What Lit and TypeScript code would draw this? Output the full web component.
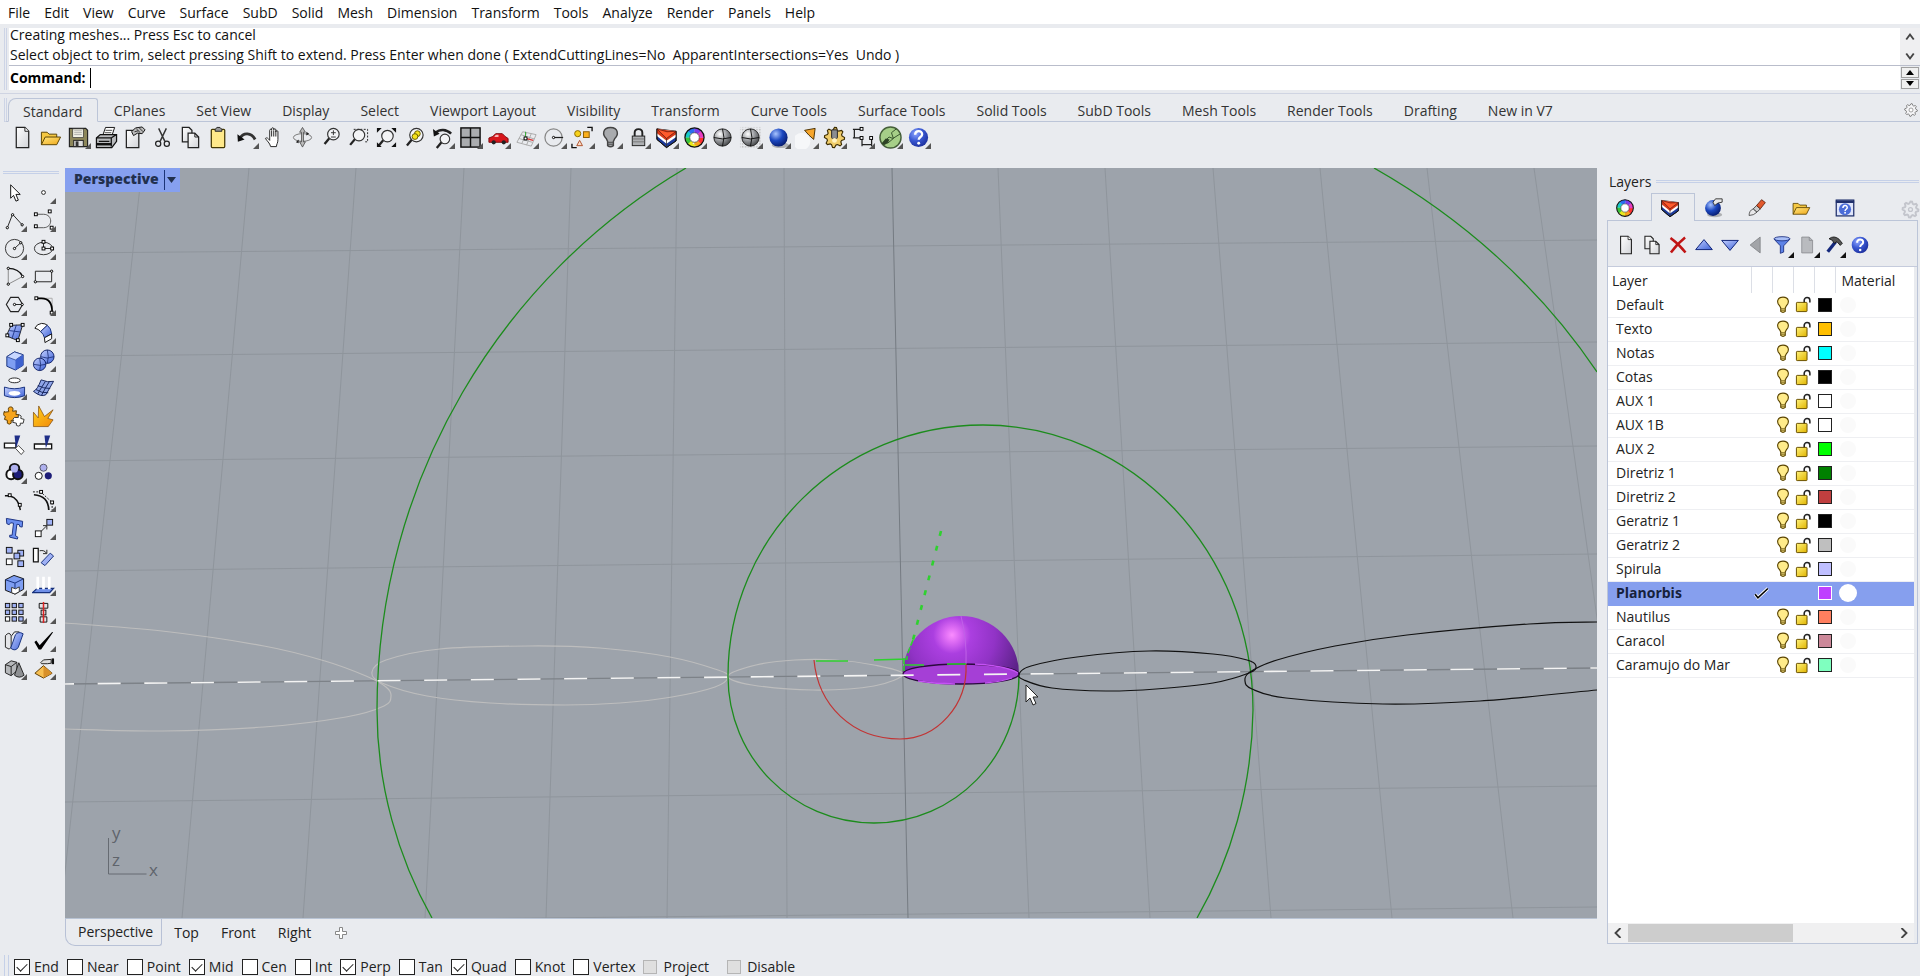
import { LitElement, html, svg, css, nothing } from "lit";
import type { SVGTemplateResult } from "lit";
import { customElement, state } from "lit/decorators.js";
import { classMap } from "lit/directives/class-map.js";

type Point = [number, number];

/** Smooth curve through a list of points (Catmull-Rom converted to Bezier). */
function smooth(points: Point[], closed = false): string {
  const n = points.length;
  const at = (i: number): Point =>
    closed ? points[(i + n) % n] : points[Math.max(0, Math.min(n - 1, i))];
  let d = `M${points[0][0]} ${points[0][1]}`;
  const last = closed ? n : n - 1;
  for (let i = 0; i < last; i++) {
    const [a, b, c, e] = [at(i - 1), at(i), at(i + 1), at(i + 2)];
    const c1 = [b[0] + (c[0] - a[0]) / 6, b[1] + (c[1] - a[1]) / 6];
    const c2 = [c[0] - (e[0] - b[0]) / 6, c[1] - (e[1] - b[1]) / 6];
    d += `C${c1[0].toFixed(1)} ${c1[1].toFixed(1)} ${c2[0].toFixed(1)} ${c2[1].toFixed(1)} ${c[0]} ${c[1]}`;
  }
  return d + (closed ? "Z" : "");
}

const node = (x: number, y: number) =>
  svg`<rect x=${x - 1.5} y=${y - 1.5} width="3" height="3" fill="#fff" stroke="#000"/>`;
const dot = (x: number, y: number) =>
  svg`<circle cx=${x} cy=${y} r="1.2" fill="#fff" stroke="#000"/>`;
const box = (x: number, y: number, s: number, fill: string) =>
  svg`<rect x=${x} y=${y} width=${s} height=${s} fill=${fill} stroke="#111"/>`;
const lens = (x: number, y: number, r: number) =>
  svg`<path d="M${x - r * 0.7} ${y + r * 0.7}L${x - r * 0.7 - 5} ${y + r * 0.7 + 6}" stroke="#222" stroke-width="2.4"/><circle cx=${x} cy=${y} r=${r} fill="#f3f4f6" stroke="#333" stroke-width="1.2"/>`;
const gearPath = (r: number, c = 12) => {
  let d = "";
  for (let i = 0; i < 32; i++) {
    const a = (i / 32) * Math.PI * 2;
    const k = i % 4 < 2 ? r : r * 0.76;
    d += `${i ? "L" : "M"}${(c + Math.cos(a) * k).toFixed(1)} ${(c + Math.sin(a) * k).toFixed(1)}`;
  }
  return d + "Z";
};

const sheet = svg`<path d="M5.500 1.500h9l4 4v17h-13z" fill="url(#paper)" stroke="#222" stroke-width="1.300"/><path d="M14.500 1.500v4h4" fill="#fff" stroke="#222"/>`;
const folder = svg`<path d="M2.500 19.500v-13h6l2 2h8v3" fill="#f5c842" stroke="#5a4200"/><path d="M2.500 19.500l4-8h16l-4 8z" fill="url(#gold)" stroke="#5a4200"/>`;
const help = svg`<circle cx="12" cy="12" r="10" fill="url(#ball)"/><path d="M8.500 9.200c0-5 7.300-5 7.300-.6 0 3-3.600 2.800-3.600 5.800" fill="none" stroke="#fff" stroke-width="2.400"/><circle cx="12.200" cy="18" r="1.500" fill="#fff"/>`;
const wheel = svg`${["#f33", "#f7a21b", "#e8e81c", "#3ac43a", "#17c9c9", "#2a6df0", "#7a3ce8", "#e83cc0"].map(
  (c, i) => svg`<circle cx="12" cy="12" r="7.500" fill="none" stroke=${c} stroke-width="5" pathLength="80" stroke-dasharray="10.500 69.500" stroke-dashoffset=${-i * 10}/>`,
)}<circle cx="12" cy="12" r="10" fill="none" stroke="#111" stroke-width="1.300"/><circle cx="12" cy="12" r="5" fill="#fff" stroke="#333" stroke-width=".7"/>`;
const layers = svg`<path d="M2 3v11l10 8.500 10-7v-10z" fill="#1c3a9a" stroke="#111"/><path d="M2 3v7.500l10 8 10-7v-6z" fill="#fff"/><path d="M2 3v4.500l10 8 10-7v-3z" fill="#d83a18"/><path d="M2 3l10.500 3 9.500-.5-10 7.500z" fill="#ff5a2c" stroke="#5a1408" stroke-width=".7"/><path d="M12 13v9" stroke="#333" stroke-width=".8"/><path d="M2 3v11l10 8.500 10-7v-10" fill="none" stroke="#111"/>`;
const greySphere = svg`<circle cx="12" cy="12" r="9" fill="url(#steel)" stroke="#222"/><path d="M3 12q9 3 18 0M12 3q3 9 0 18" fill="none" stroke="#111"/>`;
const blueSphere = svg`<ellipse cx="14" cy="20" rx="9" ry="3" fill="#000" opacity=".25"/><circle cx="12" cy="12" r="9.500" fill="url(#gloss)"/>`;
const bulbShape = (fill: string, line: string) =>
  svg`<path d="M12 1.500c-8.500 0-8.500 8-4.500 11.500l1.500 3v4.500q3 2.500 6 0v-4.500l1.500-3c4-3.500 4-11.500-4.500-11.500z" fill=${fill} stroke=${line} stroke-width="1.500"/><path d="M9.500 17h5M9.500 19h5" stroke=${line}/>`;
const hand = svg`<path d="M8 21.500c-1-4-4-6-5.500-8.500 1.500-1.500 3 0 4.500 2v-10.500c0-1.500 2-1.500 2 0v-1.500c0-1.600 2.200-1.600 2.200 0v1c0-1.500 2.200-1.500 2.200 0v2c0-1.500 2.200-1.500 2.200 0v8c0 4-1.600 5-1.600 7.500z" fill="#fff" stroke="#222"/><path d="M9 5v6M11.200 4.500v6.500M13.400 5v6" stroke="#222"/>`;
const knife = (x: number) => svg`<path d="M${x} 2.500h6l-4.500 13.500z" fill="#1f2f88"/>`;

const icons: Record<string, SVGTemplateResult> = {
  sheet,
  folder,
  help,
  wheel,
  layers,
  greySphere,
  blueSphere,
  hand,
  save: svg`<path d="M2.500 2.500h17l2 2v17h-19z" fill="#8d875a" stroke="#222" stroke-width="1.200"/><rect x="6" y="3" width="11" height="9" fill="#f4f4e8" stroke="#333" stroke-width=".7"/><path d="M7.500 5h8M7.500 7h8M7.500 9h8" stroke="#999" stroke-width=".8"/><rect x="7" y="15" width="10" height="6.500" fill="#ddd" stroke="#222"/><rect x="9" y="16" width="3" height="5" fill="#333"/>`,
  print: svg`<path d="M8 10l3-8.500h9.500l-3 9z" fill="#fff" stroke="#111"/><path d="M11 4.500h7M10 7h7" stroke="#444"/><path d="M1.500 12.500l4-3.500h17v7l-5 6.500h-16z" fill="#b8babd" stroke="#111" stroke-width="1.300"/><path d="M1.500 12.500h15.500l5-3.500M17 12.500v9M4 16h11" fill="none" stroke="#111" stroke-width="1.300"/><path d="M2 19h15" stroke="#111" stroke-width="2.500"/>`,
  props: svg`<path d="M3.500 4.500h13v18h-13z" fill="url(#paper)" stroke="#222" stroke-width="1.300"/><path d="M9 6l4-4 7-1 3 3-3 4-5-.5-4 2.500z" fill="#bbb" stroke="#111"/><path d="M14 3l4 4M17 2l4 4M12 6l4-1" stroke="#333"/>`,
  cut: svg`<path d="M8 2.500l6.500 13.500M16 2.500l-6.500 13.500" stroke="#333" stroke-width="1.500"/><circle cx="7.500" cy="18.500" r="2.700" fill="none" stroke="#222" stroke-width="1.300"/><circle cx="16.500" cy="18.500" r="2.700" fill="none" stroke="#222" stroke-width="1.300"/>`,
  copy: svg`<path d="M3.500 1.500h7l3 3v12h-10z" fill="url(#paper)" stroke="#222" stroke-width="1.300"/><path d="M9.500 7.500h7l4 4v11h-11z" fill="url(#paper)" stroke="#222" stroke-width="1.300"/><path d="M16.500 7.500v4h4" fill="none" stroke="#222"/>`,
  paste: svg`<rect x="4.500" y="3.500" width="14" height="19" rx="1" fill="#ffe98a" stroke="#443800" stroke-width="1.300"/><path d="M8.500 5.500v-2l2-2h3l2 2v2z" fill="#999" stroke="#222"/>`,
  undo: svg`<path d="M5 13c4-7 12-6 16 1" fill="none" stroke="#333" stroke-width="3"/><path d="M2.500 8.500l.5 8 7-2.500z" fill="#111"/>`,
  rotate: svg`<ellipse cx="12" cy="12" rx="9.500" ry="4" fill="none" stroke="#777"/><path d="M12 1.500l3 5h-2v10h2l-3 5.500-3-5.500h2v-10h-2z" fill="#bbb" stroke="#444" stroke-width=".8"/><path d="M5 17l3-3v4zM19 8l-3 2v-4z" fill="#222"/>`,
  zoom: svg`${lens(15, 8.5, 6)}<path d="M12.500 7h5M15 4.500v5M12.500 11.500h5" stroke="#333"/>`,
  zoomWindow: svg`<path d="M7 3.500h14.500v13h-4" fill="none" stroke="#222" stroke-dasharray="2 1.500"/>${lens(12.5, 9.5, 6)}`,
  zoomExtents: svg`${lens(13, 10.5, 6)}<path d="M2 2h5l-5 5zM22 2v5l-5-5zM22 22h-5l5-5zM2 22v-5l5 5z" fill="#111"/>`,
  zoomSelected: svg`${lens(14, 9.5, 7)}<circle cx="15" cy="8" r="3" fill="#f5e21c" stroke="#665c00"/><circle cx="12.500" cy="11" r="3" fill="#f5e21c" stroke="#665c00"/>`,
  undoView: svg`${lens(14.5, 13.5, 5)}<path d="M5 7c4-4 11-4 16 1" fill="none" stroke="#222" stroke-width="2.600"/><path d="M2 3l1 8 6-3z" fill="#111"/>`,
  fourView: svg`<rect x="2" y="2" width="20" height="20" fill="#aaacaf" stroke="#111" stroke-width="1.500"/><path d="M12 2v20M2 12h20" stroke="#111" stroke-width="1.500"/>`,
  car: svg`<path d="M2 12.500l4-1.500 3-3h7l3 3 3 2v4h-20z" fill="#d8161c" stroke="#7c0b0e"/><path d="M9 9.500l-1.500 2h4.500v-2.500h-2z" fill="#f7b4b4"/><circle cx="7" cy="17" r="2.200" fill="#222"/><circle cx="17.500" cy="17" r="2.200" fill="#222"/>`,
  cplane: svg`<path d="M2 17l6-11 14 3-5 12zM4 13l14 4M6 9l14 4.500M7 18.500l5-11.500M12 20l5-12" fill="none" stroke="#aaa"/><path d="M11 13v-7" stroke="#3a3"/><path d="M11 13l8 2" stroke="#d33" stroke-width="1.400"/>${node(11, 13)}`,
  circleRadius: svg`<circle cx="11" cy="12" r="9" fill="none" stroke="#888" stroke-width="1.300"/><path d="M11 12h10" stroke="#222" stroke-width="1.300"/>${dot(11, 12)}`,
  selectShapes: svg`<circle cx="7" cy="8" r="3.200" fill="#f7d21c" stroke="#8a6a00"/><rect x="13" y="6" width="6" height="6" fill="#fbb01c" stroke="#8a5a00"/><path d="M9 15l3 5.500h-6z" fill="#f8dccb" stroke="#b0522a"/><path d="M17 1.500h5v4M6 22.500h-5v-4" fill="none" stroke="#111" stroke-width="1.400"/>`,
  bulbGrey: bulbShape("#a9abae", "#444"),
  bulbOn: bulbShape("#ffeb8a", "#5a4400"),
  lock: svg`<path d="M8 11v-4c0-5 8-5 8 0v4" fill="none" stroke="#222" stroke-width="2"/><rect x="5.500" y="10.500" width="13" height="10" fill="#aeb0b3" stroke="#222"/><path d="M6 13.500h12M6 16.500h12" stroke="#777"/>`,
  unlock: svg`<path d="M13 10v-4c0-5 8-5 8 0v3" fill="none" stroke="#222" stroke-width="2.200"/><rect x="2" y="9" width="15" height="13" rx="1" fill="url(#brass)" stroke="#6b5200" stroke-width="1.400"/>`,
  gridSphere: svg`<path d="M1 1h22v22h-22z" fill="url(#checker)"/>${greySphere}`,
  spot: svg`<circle cx="7" cy="16" r="9" fill="#fff" opacity=".6"/><path d="M10 4.500l11-2-1.500 11.500q-5-4-9.500-9.500z" fill="#f6a52c" stroke="#4a3000"/>`,
  gearTool: svg`<path d=${gearPath(10.5)} fill="#f0cd6a" stroke="#3c2c00" stroke-width="1.200"/><rect x="9" y="4" width="6" height="9" rx="1" fill="#8a8d91" stroke="#222"/><circle cx="12" cy="15" r="2.500" fill="#fff2c0"/>`,
  dimension: svg`<path d="M3.500 3v10M2 3.500h9M2 12.500h9M11.500 12v9M21.500 12v9M12 19.500h9" fill="none" stroke="#222" stroke-width="1.300"/>${node(11, 3)}${node(11, 12.5)}${node(21, 12.5)}`,
  hopper: svg`<circle cx="12" cy="12" r="11" fill="#a6cf88" stroke="#46603a" stroke-width="1.500"/><path d="M3.500 18l7-6.500 4 1.500 8-5M9 18l6-5-2-6 5-4" fill="none" stroke="#33502a"/><path d="M3 18l4-5 4 1-2 4-4 2z" fill="#2e4426"/>`,
  gear: svg`<path d=${gearPath(9.5)} fill="#f4f4f6" stroke="#777" stroke-width="1.300"/><circle cx="12" cy="12" r="3" fill="#fff" stroke="#777"/>`,
  gearPale: svg`<path d=${gearPath(10)} fill="none" stroke="#c3c5cc" stroke-width="2.400"/><circle cx="12" cy="12" r="2.500" fill="none" stroke="#c3c5cc" stroke-width="1.600"/>`,
  pointer: svg`<path d="M8 4v14l3-3 2.500 6 2.500-1-2.500-6h4.500z" fill="#fff" stroke="#111"/>`,
  point: svg`<circle cx="12" cy="12" r="2" fill="#fff" stroke="#222"/>`,
  polyline: svg`<path d="M4.500 19.500l5.500-14 10 11" fill="none" stroke="#222"/>${dot(4.500, 19.500)}${dot(10, 6)}${dot(20, 16.5)}`,
  curve: svg`<path d="M4 5.500h8c10 0 10 14 0 14h-8" fill="none" stroke="#555"/>${node(4, 5.5)}${node(18.500, 2.500)}${node(4, 18)}${node(20.500, 19.5)}`,
  circle: svg`<circle cx="12" cy="12" r="9.500" fill="none" stroke="#333"/><path d="M12 12l7-6.500" stroke="#222"/>${dot(12, 12)}${dot(18.5, 6)}`,
  ellipse: svg`<ellipse cx="12" cy="12" rx="9.500" ry="6.500" fill="none" stroke="#333"/><path d="M12 5v7h9" fill="none" stroke="#222"/>${node(12, 5)}${node(12, 12)}${node(21, 12)}`,
  arc: svg`<path d="M5.500 20v-16.500M5.500 20l15-8" fill="none" stroke="#888"/><path d="M5.500 3.500q11 0 15 8.500" fill="none" stroke="#111" stroke-width="1.300"/>${dot(5.500, 3.500)}${dot(5.5, 20)}${dot(20.5, 12)}`,
  rect: svg`<path d="M3.500 6.500h17v11h-17z" fill="none" stroke="#222"/>${dot(20.5, 6.500)}${dot(3.500, 17.5)}`,
  polygon: svg`<path d="M8 4.500h8l4.500 7.500-4.500 7.500h-8l-4.500-7.500z" fill="none" stroke="#222" stroke-width="1.200"/><path d="M12 12h8" stroke="#222"/>${dot(12, 12)}${dot(20, 12)}`,
  fillet: svg`<path d="M5 5.500h16v16" fill="none" stroke="#aaa"/><path d="M5 5.500h5q11 0 11 14" fill="none" stroke="#000" stroke-width="1.800"/>${node(4.500, 5.500)}${node(20.5, 20.5)}`,
  surface: svg`<path d="M8.500 4.500l12-.5-5 16.500-12-5z" fill="url(#sky)" stroke="#222"/><path d="M14 4l-4.500 14M6.500 10l12 1.500" stroke="#223a8c"/>${node(8.500, 4)}${node(20.500, 4)}${node(4.500, 15)}${node(15.500, 20)}`,
  extrude: svg`<path d="M3 7.500q2-4.500 7-5 4 0 6 2l-7 6.500q-2-2.500-6-3.500z" fill="#fff" stroke="#111"/><path d="M9 11l7-6.500q4 3 4.500 9l-7.500 4q-1-4-4-6.500z" fill="url(#sky)" stroke="#16307c"/><path d="M13 17.500l7.500-4v5l-7 4z" fill="#fff" stroke="#111"/>`,
  cube: svg`<path d="M4 8l8-5 9 3v11l-8 5-9-4z" fill="#7e9ef2" stroke="#16307c"/><path d="M4 8l9 3.500 8-5.500-9-3z" fill="#c9d7ff" stroke="#16307c" stroke-width=".7"/><path d="M13 11.500l8-5.500v11l-8 5z" fill="#3e62cf"/>`,
  spheres: svg`<circle cx="16" cy="8" r="7" fill="url(#sky)" stroke="#12246a"/><circle cx="8" cy="16" r="6.500" fill="url(#sky)" stroke="#12246a"/><path d="M9 8q7 3 14 0M16 1q2 7 0 14M1.500 16q7 2 13 0M8 9.500q2 7 0 13" stroke="#12246a" stroke-width=".8"/>`,
  booleanHole: svg`<ellipse cx="12" cy="3.500" rx="6" ry="2.500" fill="#fff" stroke="#222"/><path d="M1.500 10.500q10 3.500 21 0v9q-10 4-21 0z" fill="url(#sky)" stroke="#16307c"/><ellipse cx="12" cy="17" rx="6" ry="2.500" fill="#fff"/>`,
  mesh: svg`<path d="M1.500 15q4-1.500 8-12 7 3 13 1.500-4 7-8 14-5 3-13-3.500z" fill="#8fa5e8" stroke="#16255c"/><path d="M6 9q6 3 13 3M4 13q6 4 13 3.500M14 4.500q-4 6-8 13M18 5q-4 6-8 14" fill="none" stroke="#16255c"/>`,
  puzzle: svg`<path d="M1.500 7.500l4.500-.5q-1.500-5 2-5t2 4.500l4-.5-.5 4q4-1 4 2t-4 1.500l-1 3.500-4-1q1 4-2 4t-2-4l-3-1 1-3q-3-1-1-5.500z" fill="#f7a51c" stroke="#5a3a00"/><path d="M12 13l4 0q-1-3 1.500-2.500t1 3.500l3.500 1-1 4-3 0q1 3-2 3t-2-3l-4-1 1-2q-2-1 1-3z" fill="#fff" stroke="#333"/>`,
  explode: svg`<path d="M1.500 22.500v-15l5 6 .5-12.500 6 11 9-7-5.500 9 5.500 1.500-5 7z" fill="url(#fire)" stroke="#7a4200" stroke-width=".7"/>`,
  trim: svg`<path d="M1.500 10.500h12v5h-12z" fill="#fff" stroke="#111" stroke-width="1.400"/>${knife(12)}<path d="M13 16l3-3 6 6-3 3.500z" fill="#fff" stroke="#444"/>`,
  split: svg`<path d="M2.500 11.500h18v5h-18z" fill="#fff" stroke="#111" stroke-width="1.400"/>${knife(13)}`,
  groupIcon: svg`<circle cx="12" cy="8" r="5" fill="#aeb0ee" stroke="#111" stroke-width="2"/><circle cx="8.500" cy="14" r="5" fill="#fff" stroke="#111" stroke-width="2"/><circle cx="15.500" cy="14" r="5" fill="#1d1d78" stroke="#111" stroke-width="2"/><circle cx="12" cy="8.500" r="3.600" fill="#aeb0ee"/>`,
  ungroup: svg`<circle cx="12" cy="7" r="3.700" fill="#aeb0ee" stroke="#556"/><circle cx="7" cy="15.500" r="3.700" fill="#fff" stroke="#111"/><circle cx="17" cy="15.500" r="3.700" fill="#1d1d78"/>`,
  pointsEdit: svg`<path d="M2 7h5q10 3 11 15" fill="none" stroke="#111" stroke-width="1.500"/>${node(7, 6.500)}${node(17.500, 16.5)}`,
  pointsOn: svg`<path d="M2 6q15 1 15.500 16" fill="none" stroke="#111" stroke-width="1.800"/><path d="M1 3h8l12 11v8" fill="none" stroke="#111" stroke-dasharray="2 1.500"/>${node(9.500, 3)}${node(21, 14)}`,
  textT: svg`<path d="M3.500 1.500l17 3-.5 6-2.500-.5-.5-2-2.500-.5-1.500 12 2.500 1.500-.5 2-8-2 0-2 2.500 0 1.500-12.500-3-.5-1.500 2-2.500-1z" fill="#6a8ef0" stroke="#1a3080"/>`,
  move: svg`<path d="M9 15.500l6-6M15.500 13v-4h-4" fill="none" stroke="#222"/>${box(3.5, 14.5, 6, "#fff")}${box(15.5, 2.5, 6, "#9fb1f5")}`,
  copyBoxes: svg`${box(3.500, 2.5, 6, "#9fb1f5")}${box(15.5, 5.5, 6, "#9fb1f5")}${box(11.5, 8.5, 6, "#9fb1f5")}${box(3.500, 14.5, 6, "#fff")}${box(15.5, 16.500, 6, "#9fb1f5")}`,
  rotate2d: svg`<path d="M1.500 3.500h5v14h-5z" fill="#fff" stroke="#111" stroke-width="1.300"/><path d="M9.500 18.500l9.500-10 3.500 3-9 10z" fill="#9fb1f5" stroke="#16307c"/><path d="M8 6q5-1 7 2.500M15.500 5v4h-4" fill="none" stroke="#222"/>`,
  cage: svg`<path d="M2.500 7l9-4.500 10 3.500v11l-9 5-10-4z" fill="#7e9ef2" stroke="#111"/><path d="M2.500 7l10 3.500 9-4.500M12.500 10.500v11.500" fill="none" stroke="#16307c"/><path d="M9 15l4 1.500 4-2v5l-4.500 2.500-3.500-1.500z" fill="#fff" stroke="#333"/>`,
  project: svg`<path d="M.5 20.500l5-4.500h17l-4 4.500z" fill="#6f8fe8" stroke="#16307c" stroke-width="1.300"/><path d="M6 4v13M12 4v13M18 4v13" stroke="#fff" stroke-width="2.800"/>`,
  array: svg`${[2.5, 9.5, 16.5].map((y) => [2.5, 9.5, 16.5].map((x) => box(x, y, 4.5, x < 3 && y > 16 ? "#fff" : "#9fb1f5")))}`,
  align: svg`${box(9.5, 9.500, 5, "#e2e3e6")}<path d="M7.500 2.500h9v5h-9zM8.500 16.500h7v5.500h-7z" fill="#e2e3e6" stroke="#111"/><path d="M12 1v22" stroke="#d22" stroke-width="1.600"/>`,
  shell: svg`<path d="M2.500 7q4-5 6 0v12l-2 2-4-2z" fill="#e4e5e8" stroke="#222"/><path d="M8 20l5-14q3-4 8-1l-5 14q-3 5-8 1z" fill="url(#sky)" stroke="#16307c"/><path d="M9 7l3-4 5 0" fill="none" stroke="#222"/>`,
  check: svg`<path d="M2.500 13.500l2-1.500 3.500 5 13-14 1 .5-12.500 18h-2.500z" fill="#000"/>`,
  solids: svg`<path d="M2.500 8l6-4 6 1.500v9l-6 5-6-3z" fill="#b5b7ba" stroke="#222"/><path d="M2.500 8l6 2 6-4.500M8.500 10v9" fill="none" stroke="#222"/><path d="M16.500 6l5.500 13q-5 4-10 0z" fill="#8e9093" stroke="#222"/>`,
  pyramid: svg`<path d="M3 17l9-8 9 8-9 5z" fill="#f7bf52" stroke="#5a3a00"/><path d="M12 9v13l9-5z" fill="#d8902a"/><path d="M9 6l3-3 8-.5v4l-4 .5-6 0z" fill="#ddd" stroke="#222"/><path d="M20.500 1.500h2.500v6h-2.500z" fill="#111"/>`,
  bomb: svg`${blueSphere}<path d="M12 5l3-4 8 0v4l-5 1-4 3z" fill="#e6e6e8" stroke="#222"/>`,
  brush: svg`<path d="M2.500 21q0-6 5-8l4.500 4q-4 4-9.500 4z" fill="#e8e8ea" stroke="#444"/><path d="M7.500 13l4-4 4.500 4-4 4z" fill="#ccc" stroke="#333"/><path d="M11.500 9l6-7 4.500 3.500-6 7.500z" fill="#e2582c" stroke="#5a1d08"/>`,
  helpWindow: svg`<rect x="1.500" y="2.500" width="21" height="19" fill="#dfe5fa" stroke="#20306c" stroke-width="1.500"/><path d="M1 4.500h22" stroke="#20306c" stroke-width="3"/><circle cx="12" cy="13.500" r="7.300" fill="#4a6cd8"/><path d="M9.500 12c0-4 5.200-4 5.200-.5 0 2-2.600 2-2.600 4" fill="none" stroke="#fff" stroke-width="1.800"/><circle cx="12.100" cy="17.700" r="1.100" fill="#fff"/>`,
  remove: svg`<path d="M3 3.500q10 7 18 17.500M20.500 3q-10 8-17 18" fill="none" stroke="#c01414" stroke-width="3"/>`,
  up: svg`<path d="M12 5.500l10 12h-20z" fill="url(#sky)" stroke="#14287c" stroke-width="1.200"/>`,
  down: svg`<path d="M12 18.500l10-12h-20z" fill="url(#sky)" stroke="#14287c" stroke-width="1.200"/>`,
  left: svg`<path d="M5 12l12-9.500v19z" fill="#a2a4a8" stroke="#808286"/>`,
  funnel: svg`<path d="M2.500 5l7.500 8v9l4-1.500v-7.500l7.500-8z" fill="#5d82e6" stroke="#14287c"/><ellipse cx="12" cy="4.500" rx="9.500" ry="2.500" fill="#a9bff7" stroke="#14287c"/>`,
  sheetGrey: svg`<path d="M4.500 2.500h9l4 4v15h-13z" fill="#b9bbbf" stroke="#8a8c90"/><path d="M13.500 2.500v4h4" fill="none" stroke="#8a8c90"/>`,
  hammer: svg`<path d="M14 8l-9.500 12" stroke="#14287c" stroke-width="4"/><path d="M6 4.500q6-4.500 12 .5l4 5-2.500 2.500-4-4.500-3 2-3-4z" fill="#555" stroke="#111"/>`,
  tick: svg`<path d="M3 13l4 5 14-13" fill="none" stroke="#fff" stroke-width="4.500"/><path d="M3 13l4 5 14-13" fill="none" stroke="#000" stroke-width="2.200"/>`,
};

interface Tool { icon: string; name: string; more?: boolean }
const tools = (spec: string): Tool[] =>
  spec.trim().split(/\s+/).map((s) => ({ icon: s.replace("+", ""), name: s.replace("+", ""), more: s.endsWith("+") }));

const MENUS = ["File", "Edit", "View", "Curve", "Surface", "SubD", "Solid", "Mesh", "Dimension", "Transform", "Tools", "Analyze", "Render", "Panels", "Help"];
const TABS = ["Standard", "CPlanes", "Set View", "Display", "Select", "Viewport Layout", "Visibility", "Transform", "Curve Tools", "Surface Tools", "Solid Tools", "SubD Tools", "Mesh Tools", "Render Tools", "Drafting", "New in V7"];
const STANDARD = tools(`sheet folder save+ print props cut copy paste undo+ hand rotate zoom zoomWindow zoomExtents
  zoomSelected undoView+ fourView+ car+ cplane+ circleRadius+ selectShapes+ bulbGrey+ lock+ layers+ wheel+ greySphere
  gridSphere+ blueSphere+ spot+ gearTool+ dimension+ hopper+ help+`);
const SIDE = tools(`pointer point+ polyline+ curve+ circle+ ellipse+ arc+ rect+ polygon+ fillet+ surface+ extrude+
  cube+ spheres+ booleanHole+ mesh+ puzzle explode trim split groupIcon+ ungroup pointsEdit pointsOn+ textT move+
  copyBoxes rotate2d cage+ project+ array+ align+ shell+ check+ solids+ pyramid+`);
const PANEL_TABS = ["wheel", "layers", "bomb", "brush", "folder", "helpWindow"];
const PANEL_TOOLS = tools("sheet copy remove up down left funnel+ sheetGrey+ hammer+ help");
const VIEWS = ["Perspective", "Top", "Front", "Right"];

interface Layer { name: string; color: string; current?: boolean }
const LAYERS: Layer[] = [
  { name: "Default", color: "#000000" },
  { name: "Texto", color: "#ffbf00" },
  { name: "Notas", color: "#00ffff" },
  { name: "Cotas", color: "#000000" },
  { name: "AUX 1", color: "#ffffff" },
  { name: "AUX 1B", color: "#ffffff" },
  { name: "AUX 2", color: "#00ff00" },
  { name: "Diretriz 1", color: "#008000" },
  { name: "Diretriz 2", color: "#bf3f3f" },
  { name: "Geratriz 1", color: "#000000" },
  { name: "Geratriz 2", color: "#bfbfbf" },
  { name: "Spirula", color: "#bfbfff" },
  { name: "Planorbis", color: "#bf3fff", current: true },
  { name: "Nautilus", color: "#ff7f5f" },
  { name: "Caracol", color: "#cc8899" },
  { name: "Caramujo do Mar", color: "#7fffbf" },
];

const SNAPS: { name: string; on?: boolean; off?: boolean }[] = [
  { name: "End", on: true }, { name: "Near" }, { name: "Point" }, { name: "Mid", on: true },
  { name: "Cen" }, { name: "Int" }, { name: "Perp", on: true }, { name: "Tan" },
  { name: "Quad", on: true }, { name: "Knot" }, { name: "Vertex" },
  { name: "Project", off: true }, { name: "Disable", off: true },
];

const GRID_ROWS = [[253, 240], [356, 342], [461, 446], [571, 554], [802, 786], [923, 907]];
const GRID_COLS = [[142, 60], [249, 182], [356, 303], [464, 425], [571, 546], [677, 667], [784, 787], [998, 1029], [1105, 1150], [1213, 1271], [1320, 1392], [1427, 1513], [1534, 1639]];

const GREEN = [
  "M686 168C502 276 377 478 377 710C377 785 398 858 432 918",
  "M1374 168C1462 218 1540 287 1597 372",
  "M728 676C728 537 842 425 983 425C1132 425 1253 552 1253 710C1252 787 1231 859 1197 918",
  "M728 676C728 757 793 823 874 823C955 823 1019 757 1019 674",
];
const RED = "M814 660C818 705 852 739 900 739C937 739 968 705 966 664";
const PALE: { points: Point[]; closed?: boolean }[] = [
  { points: [[65, 623], [162, 631], [264, 646], [325, 661], [366, 676], [386, 687], [391, 696], [384, 706], [346, 717], [264, 727], [162, 731], [65, 729]] },
  { points: [[372, 672], [386, 660], [440, 649], [529, 646], [600, 648], [670, 657], [718, 670], [728, 677], [715, 687], [672, 697], [620, 703], [565, 705], [490, 703], [427, 696], [382, 683]], closed: true },
  { points: [[728, 676], [756, 665], [795, 660], [835, 660], [874, 665], [903, 674], [874, 686], [813, 690], [752, 685]], closed: true },
];
const BLACK: { points: Point[]; closed?: boolean }[] = [
  { points: [[1019, 674], [1031, 666], [1077, 657], [1149, 651], [1213, 654], [1247, 660], [1256, 666], [1249, 673], [1213, 683], [1156, 689], [1106, 691], [1052, 688], [1024, 680]], closed: true },
  { points: [[1597, 622], [1529, 624], [1407, 635], [1335, 646], [1277, 660], [1250, 672], [1245, 681], [1252, 689], [1286, 698], [1383, 704], [1480, 701], [1597, 690]] },
];

@customElement("app-root")
export class AppRoot extends LitElement {
  @state() private view = "Perspective";
  @state() private tab = "Standard";

  static styles = css`
    :host {
      display: flex; flex-direction: column; height: 100vh; overflow: hidden;
      background: #e9ebef; color: #222; font: 14px/20px "Open Sans", "Noto Sans", sans-serif;
    }
    * { box-sizing: border-box; }
    button { font: inherit; color: inherit; background: none; border: 0; padding: 0; margin: 0; }
    button, input { border-radius: 0; }
    svg { display: block; }

    .menu { display: flex; height: 24px; padding: 0 1px 2px; background: #fff; flex: none; }
    .menu button { padding: 0 7px; line-height: 26px; color: #111; }

    .command { display: grid; grid-template-columns: 1fr 20px; margin-top: 4px; margin-left: 4px; border-left: 3px double #cdd4e6; padding-left: 2px; background-clip: padding-box; flex: none; }
    .history { background: #fff; height: 38px; padding-left: 1px; color: #111; border-bottom: 1px solid #b9bdcb; display: flex; flex-direction: column; justify-content: flex-end; }
    .history p { margin: 0; white-space: nowrap; }
    .scroll { background: #efeff1; display: grid; border-bottom: 1px solid #b9bdcb; place-items: center; }
    .prompt { display: flex; align-items: center; height: 24px; background: #fff; padding-left: 1px; }
    .prompt label { font-weight: 700; color: #000; margin-right: 4px; }
    .prompt input { flex: 1; height: 20px; border: 0; border-left: 1px solid #000; outline: 0; background: none; font: inherit; }
    .spin { display: grid; gap: 1px; padding: 1px; }
    .spin button { display: grid; place-items: center; background: #f0f0f0; border: 1px solid #a0a0a0; }

    .ribbon { border-top: 1px solid #cfd4e2; margin-top: 3px; flex: none; padding-left: 4px; height: 75px; }
    .tabs { display: flex; gap: 1px; margin-top: 4px; height: 24px; border-bottom: 1px solid #bcc5d8; border-left: 3px double #cdd4e6; padding-left: 1px; }
    .tabs button { padding: 0 15px; line-height: 25px; height: 24px; white-space: nowrap; color: #333; }
    .tabs .on { border: 1px solid #bcc5d8; border-bottom-color: #e9ebef; border-top-left-radius: 8px; border-top-right-radius: 3px; padding: 0 14px; }
    .tabs .gear { margin-left: auto; padding: 0 1px; display: grid; place-items: center; }
    .tools { display: flex; padding-left: 4px; padding-top: 1px; }
    .tool { position: relative; width: 28px; height: 28px; display: grid; place-items: center; }
    .tool.more::after { content: ""; position: absolute; right: 1px; bottom: 2px; border: 3px solid; border-color: transparent #555 #555 transparent; }

    .body { flex: 1; min-height: 0; display: grid; grid-template-columns: 65px minmax(0, 1fr) 323px; }
    .side { padding-top: 3px; }
    .side .grip { height: 3px; margin: 0 6px 4px 3px; border: solid #c5d0e8; border-width: 1px 0; }
    .side .grid { display: grid; grid-template-columns: 29px 28px; }
    .main { display: grid; grid-template-rows: minmax(0, 1fr) 29px; }
    .viewport { position: relative; overflow: hidden; background: #9da3ab; border-bottom: 1px solid #b8c3d4; }
    .viewport > svg { width: 100%; height: 100%; }
    .title { position: absolute; left: 0; top: 0; display: flex; align-items: center; height: 24px; background: #86a0ef; font-weight: 700; color: #22304e; }
    .title b { padding: 0 5px 2px 9px; }
    .title button { height: 20px; border-left: 1px solid #1c3478; padding: 0 4px 0 2px; }
    .views { display: flex; }
    .views button { padding: 0 11px; height: 27px; }
    .views .on { border: 1px solid #b8c1d6; border-top: 0; border-bottom-left-radius: 10px; border-bottom-right-radius: 3px; padding: 0 8px 0 12px; }
    .views .on + button { margin-left: 1px; }
    .views .plus { padding: 0 13px; }

    .panel { display: flex; flex-direction: column; margin: 0 1px 4px 10px; min-width: 0; }
    .heading { display: flex; align-items: center; gap: 5px; height: 25px; padding: 2px 0 0 2px; }
    .heading i { flex: 1; height: 3px; border: solid #c5d0e8; border-width: 1px 0; }
    .ptabs { display: flex; height: 28px; border-bottom: 1px solid #bcc5d8; margin-right: 1px; }
    .ptabs button { width: 44px; height: 28px; display: grid; place-items: center; border: 1px solid transparent; border-bottom: 0; padding-right: 8px; }
    .ptabs .on { border-color: #bcc5d8; background: #e9ebef; padding: 0 6px 0 0; }
    .ptabs .gear { margin-left: auto; width: 18px; padding: 3px 0 0; }
    .frame { flex: 1; min-height: 0; border: 1px solid #bcc5d8; border-top: 0; margin-right: 1px; display: flex; flex-direction: column; padding-right: 3px; }
    .ptools { display: flex; height: 46px; align-items: center; padding: 2px 0 0 5px; border-bottom: 1px solid #c5cbdc; margin-right: -3px; }
    .ptools .tool { width: 26px; }
    .ptools .tool.more::after { border-color: transparent #111 #111 transparent; bottom: 1px; }
    .list { flex: 1; min-height: 0; background: #fff; overflow: hidden; }
    table { width: 100%; border-collapse: collapse; table-layout: fixed; }
    th { height: 26px; padding: 2px 4px 0; font-weight: 400; text-align: left; border-right: 1px solid #dcdfe6; }
    th:last-child { border: 0; padding-left: 6px; }
    td { height: 24px; padding: 0; border-bottom: 1px solid #eeeff2; }
    .name { padding-left: 8px; white-space: nowrap; color: #222; }
    td svg { margin: 0 auto; }
    .current td { background: #869fee; border-color: #869fee; }
    .current .name { font-weight: 700; color: #16213c; }
    .swatch { display: block; width: 14px; height: 14px; margin: 0 auto; border: 1px solid #222; }
    .current .swatch { border-color: #fff; }
    .material { display: block; width: 16px; height: 16px; margin-left: 5px; border-radius: 50%; background: #fafafa; }
    .current .material { width: 18px; height: 18px; margin-left: 4px; background: #fff; }
    .hscroll { display: grid; grid-template-columns: 20px 1fr 20px; height: 20px; background: #f0f0f1; align-items: center; justify-items: center; }
    .track { width: 100%; height: 18px; }
    .thumb { width: 62%; height: 18px; background: #cdcdcd; }

    .snaps { display: flex; flex: none; height: 28px; padding: 7px 0 0; margin-left: 4px; }
    .snaps::before { content: ""; width: 3px; border: solid #c5d0e8; border-width: 0 1px; margin-right: 5px; }
    .snap { display: flex; align-items: center; gap: 4px; margin-right: 8px; height: 24px; }
    .snap.off { margin-right: 18px; gap: 6px; }
    .snap input { appearance: none; margin: 0; width: 16px; height: 16px; border: 1px solid #222; background: #fff; display: grid; place-items: center; }
    .snap input:checked::after { content: ""; width: 9px; height: 5px; border: solid #222; border-width: 0 0 1px 1px; transform: translateY(-1px) rotate(-45deg); }
    .snap input:disabled { width: 14px; height: 14px; border-color: #b5b5b5; background: #dfdfdf; }
  `;

  private icon(name: string, size = 22) {
    return html`<svg width=${size} height=${size} viewBox="0 0 24 24" fill="none" aria-hidden="true">${icons[name]}</svg>`;
  }

  private toolButton = (t: Tool, size: number) => html`
    <button class=${classMap({ tool: true, more: !!t.more })} aria-label=${t.name}>${this.icon(t.icon, size)}</button>`;

  private chevron(d: string, stroke = "#444") {
    return html`<svg width="10" height="10" viewBox="0 0 8 8"><path d=${d} fill="none" stroke=${stroke} stroke-width="1.500"/></svg>`;
  }

  private defs() {
    const ramp = (id: string, stops: string[], radial = false) => {
      const s = stops.map((c, i) => svg`<stop offset=${i / (stops.length - 1)} stop-color=${c}/>`);
      return radial
        ? svg`<radialGradient id=${id} cx=".35" cy=".3" r=".75">${s}</radialGradient>`
        : svg`<linearGradient id=${id} x2="1" y2="1">${s}</linearGradient>`;
    };
    return svg`<defs>
      ${ramp("paper", ["#ffffff", "#d2d4d8"])}${ramp("gold", ["#ffe680", "#f0a818"])}${ramp("brass", ["#fff27a", "#e0b400"])}
      ${ramp("sky", ["#c3d0ff", "#3f63d8"])}${ramp("fire", ["#ffd21c", "#f28a0c"])}
      ${ramp("ball", ["#8fa6ff", "#3a58d2", "#1c2f9c"], true)}${ramp("steel", ["#ffffff", "#9c9ea2", "#444648"], true)}
      ${ramp("gloss", ["#a8c4ff", "#1c48c0", "#061a6c"], true)}
      <pattern id="checker" width="3" height="3" patternUnits="userSpaceOnUse"><path d="M0 0h1.500v1.500h-1.500z" fill="#bbb"/></pattern>
      <radialGradient id="dome" gradientUnits="userSpaceOnUse" cx="952" cy="635" r="72">
        <stop offset="0" stop-color="#fa8cff"/><stop offset=".1" stop-color="#de6cf4"/><stop offset=".26" stop-color="#ab3fe0"/>
        <stop offset=".6" stop-color="#9133c6"/><stop offset="1" stop-color="#5c2288"/>
      </radialGradient>
    </defs>`;
  }

  private scene() {
    return html`<svg viewBox="65 168 1532 750" preserveAspectRatio="xMidYMid slice" role="img" aria-label="Perspective view" fill="none">
      ${this.defs()}
      <g stroke="#8f959c">
        ${GRID_ROWS.map(([a, b]) => svg`<path d="M65 ${a}L1597 ${b}"/>`)}
        ${GRID_COLS.map(([a, b]) => svg`<path d="M${a} 168L${b} 918"/>`)}
        <path d="M892 168L908 918" stroke="#757b82"/>
      </g>
      <path d="M65 684L1597 668" stroke="#7d8288" stroke-width="1.300"/>
      <g stroke="#bdbdbd" stroke-width="1.200">${PALE.map((c) => svg`<path d=${smooth(c.points, c.closed)}/>`)}</g>
      <g stroke="#1c8c1c" stroke-width="1.300">${GREEN.map((d) => svg`<path d=${d}/>`)}</g>
      <g stroke="#111" stroke-width="1.200">${BLACK.map((c) => svg`<path d=${smooth(c.points, c.closed)}/>`)}</g>
      <path d="M903 674A58 58 0 0 1 1019 674A58 10 0 0 1 903 674Z" fill="url(#dome)"/>
      <ellipse cx="961" cy="674" rx="58" ry="10" fill="#a53fd6" stroke="#2b0a3e" stroke-width="1.300"/>
      <path d="M961 616Q967 640 966 664" stroke="#c061e8"/>
      <path d="M975 664Q1008 666 1018 673M918 681Q936 684 955 684M985 683Q1000 682 1012 678" stroke="#c452f4" stroke-width="1.300"/>
      <path d="M65 684L1597 668" stroke="#f4f4f4" stroke-width="1.600" stroke-dasharray="23 23.650" stroke-dashoffset="14"/>
      <path d=${RED} stroke="#c23434" stroke-width="1.200"/>
      <g stroke="#2fd12f">
        <path d="M816 661H848M874 660L907 659V656M904 665H924M947 664H966" stroke-width="1.600"/>
        <path d="M941 531L913 640" stroke-width="2.600" stroke-dasharray="5 10.300"/>
        <path d="M913 640L907 655M904 658V671" stroke-dasharray="6 2" stroke-width="1.600"/>
      </g>
      <path d="M1026 685v17l4-4 3 7 3-1.500-3-6.500h5z" fill="#fff" stroke="#222"/>
      <path d="M108.500 838v36h38" stroke="#666b72"/>
      <g fill="#5f646b" font-size="17"><text x="112" y="839">y</text><text x="112" y="866">z</text><text x="149" y="876">x</text></g>
    </svg>`;
  }

  private layerRow = (l: Layer) => html`
    <tr class=${l.current ? "current" : ""}>
      <td class="name">${l.name}</td>
      <td>${l.current ? this.icon("tick", 17) : nothing}</td>
      <td>${l.current ? nothing : this.icon("bulbOn", 18)}</td>
      <td>${l.current ? nothing : this.icon("unlock", 17)}</td>
      <td><span class="swatch" style="background:${l.color}"></span></td>
      <td><span class="material"></span></td>
    </tr>`;

  render() {
    return html`
      <nav class="menu">${MENUS.map((m) => html`<button>${m}</button>`)}</nav>

      <section class="command">
        <div class="history">
          <p>Creating meshes... Press Esc to cancel</p>
          <p>Select object to trim, select pressing Shift to extend. Press Enter when done ( ExtendCuttingLines=No&nbsp; ApparentIntersections=Yes&nbsp; Undo )</p>
        </div>
        <div class="scroll">
          <button aria-label="Scroll up">${this.chevron("M1 6l3-4 3 4")}</button>
          <button aria-label="Scroll down">${this.chevron("M1 2l3 4 3-4")}</button>
        </div>
        <div class="prompt"><label for="cmd">Command:</label><input id="cmd" autocomplete="off"></div>
        <div class="spin">
          <button aria-label="Previous command"><svg width="8" height="5" viewBox="0 0 8 5"><path d="M4 0l4 5h-8z"/></svg></button>
          <button aria-label="Next command"><svg width="8" height="5" viewBox="0 0 8 5"><path d="M4 5l4-5h-8z"/></svg></button>
        </div>
      </section>

      <section class="ribbon">
        <div class="tabs">
          ${TABS.map((t) => html`<button class=${t === this.tab ? "on" : ""} @click=${() => (this.tab = t)}>${t}</button>`)}
          <button class="gear" aria-label="Toolbar options">${this.icon("gear", 16)}</button>
        </div>
        <div class="tools">${STANDARD.map((t) => this.toolButton(t, 23))}</div>
      </section>

      <section class="body">
        <aside class="side">
          <div class="grip"></div>
          <div class="grid">${SIDE.map((t) => this.toolButton(t, 23))}</div>
        </aside>

        <main class="main">
          <div class="viewport">
            ${this.scene()}
            <div class="title"><b>${this.view}</b>
              <button aria-label="Viewport menu"><svg width="9" height="6" viewBox="0 0 9 6"><path d="M0 0h9l-4.500 6z" fill="#22304e"/></svg></button>
            </div>
          </div>
          <div class="views">
            ${VIEWS.map((v) => html`<button class=${v === this.view ? "on" : ""} @click=${() => (this.view = v)}>${v}</button>`)}
            <button class="plus" aria-label="New view"><svg width="12" height="12" viewBox="0 0 12 12"><path d="M4.500 .5h3v4h4v3h-4v4h-3v-4h-4v-3h4z" fill="#fff" stroke="#888"/></svg></button>
          </div>
        </main>

        <aside class="panel">
          <div class="heading">Layers<i></i></div>
          <div class="ptabs">
            ${PANEL_TABS.map((p) => html`<button class=${p === "layers" ? "on" : ""} aria-label=${p}>${this.icon(p, 20)}</button>`)}
            <button class="gear" aria-label="Panel options">${this.icon("gearPale", 19)}</button>
          </div>
          <div class="frame">
            <div class="ptools">${PANEL_TOOLS.map((t) => this.toolButton(t, 20))}</div>
            <div class="list">
              <table>
                <colgroup><col width="143"><col width="21"><col width="21"><col width="21"><col width="21"><col></colgroup>
                <thead><tr><th>Layer</th><th></th><th></th><th></th><th></th><th>Material</th></tr></thead>
                <tbody>${LAYERS.map(this.layerRow)}</tbody>
              </table>
            </div>
            <div class="hscroll">
              <button aria-label="Scroll left">${this.chevron("M6 0l-4 4 4 4")}</button>
              <div class="track"><div class="thumb"></div></div>
              <button aria-label="Scroll right">${this.chevron("M2 0l4 4-4 4")}</button>
            </div>
          </div>
        </aside>
      </section>

      <footer class="snaps">
        ${SNAPS.map((s) => html`<label class=${classMap({ snap: true, off: !!s.off })}><input type="checkbox" .checked=${!!s.on} ?disabled=${!!s.off}>${s.name}</label>`)}
      </footer>`;
  }
}
